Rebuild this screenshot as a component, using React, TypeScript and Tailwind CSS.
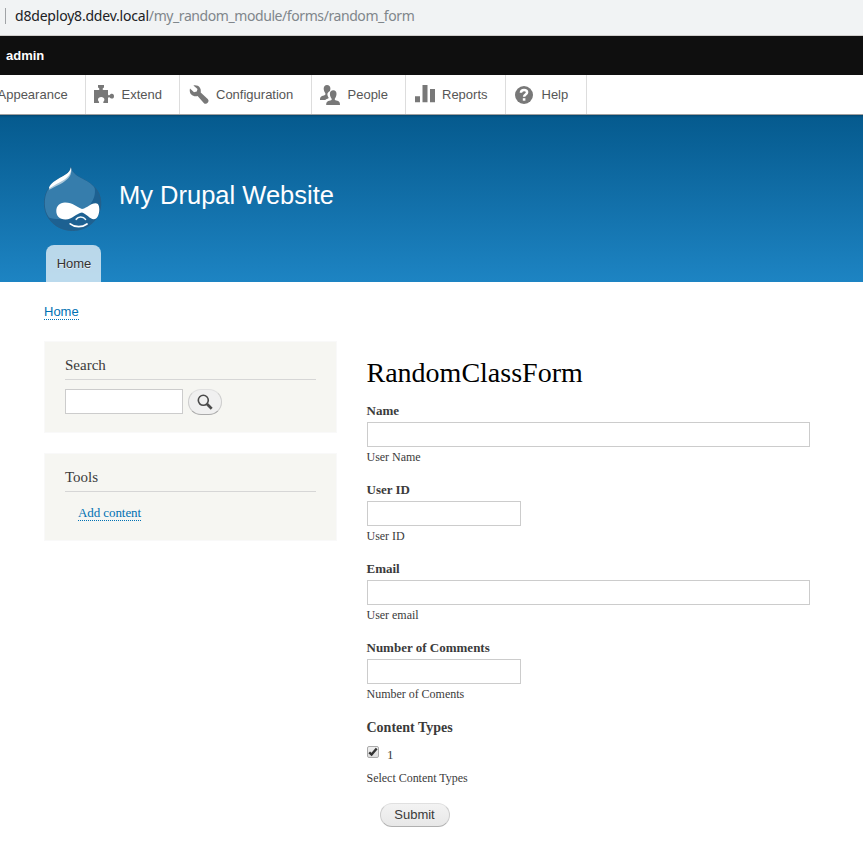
import React from "react";

const sans = "font-['Liberation_Sans',Arial,sans-serif]";
const serif = "font-['Liberation_Serif',Georgia,serif]";

function ExtendIcon() {
  return (
    <svg className="block h-[20px] w-[20px]" viewBox="0 0 20 20" fill="#787878">
      <path d="M4 0h6v2.200c-.2.600-1.400.800-1.400 1.800 0 .8.600 1 1.200 1H14v4.400c.2.9 1 1.100 1.700.6.7-.8 1.100-1.200 2.300-1.200 1.300 0 2 1.100 2 2.400s-.7 2.400-2 2.400c-1.200 0-1.600-.4-2.300-1.100-.7-.5-1.500-.3-1.700.6V18H9.500c-.5-.5-.2-1.200.2-1.700.5-.6.700-1 .7-1.600 0-1.700-1.400-2.700-3.200-2.700S4 13 4 14.700c0 .7.300 1.100.8 1.700.4.5.500 1.100.1 1.600H0V5h4.400c.7 0 1-.3 1-1 0-1-1.200-1.200-1.400-1.800z" />
    </svg>
  );
}

function WrenchIcon() {
  return (
    <svg className="block h-[20px] w-[20px]" viewBox="0 0 20 20" fill="#787878">
      <path d="M4.400.500C7 0 9.500.7 10.900 2.700c1 1.500 1 3.200.8 4.700l7 6.500c2.400 2.300-.7 6.200-3.500 4.500L8.600 11c-2.200.6-4.700.2-6.300-1.500C.8 8 .4 5.600 1 3.600l4 3.600 2.800-.8.700-2.400z" />
    </svg>
  );
}

function PeopleIcon() {
  return (
    <svg className="block h-[20px] w-[20px]" viewBox="0 0 20 20" fill="#787878">
      <path d="M7 0c2.100 0 3.400 1.400 3.400 3.500 0 1-.1 1.500-.5 2.400C7.800 7 7 8.400 7.500 10.300c.2 1.100.8 2 1.300 2.800-1.100.8-2.500 1-3.500 1.900H0c0-3 .8-3.900 4-4.600 1.400-.3 1.900-.9 1.200-2.300C4.200 6.700 3.700 5.100 3.700 3.600 3.700 1.500 5 0 7 0z" />
      <path d="M13.300 5.200c2.100 0 3.200 1.500 3.200 3.500 0 1.500-.5 3.300-1.400 4.500-.8 1.100-.2 1.900 1.200 2.200 3 .7 3.700 1.600 3.700 4.600H6.200c0-3 .8-3.900 4-4.600 1.500-.3 2-.9 1.100-2.200-.9-1.200-1.400-3-1.400-4.500 0-2 1.300-3.500 3.400-3.500z" />
    </svg>
  );
}

function ReportsIcon() {
  return (
    <svg className="block h-[20px] w-[20px]" viewBox="0 0 20 20" fill="#787878">
      <path d="M0 11.300h5v6H0zM7.500 0h5v17.300h-5zM15 4h5v13.300h-5z" />
    </svg>
  );
}

function HelpIcon() {
  return (
    <svg className="block h-[20px] w-[20px]" viewBox="0 0 20 20">
      <circle cx="10" cy="10" r="9" fill="#787878" />
      <path d="M6.900 7.700C7 5.800 8.300 4.900 10 4.900c1.800 0 3.100.9 3.100 2.400 0 2.300-3 2-3 4.400" fill="none" stroke="#fff" strokeWidth="2.500" />
      <path d="M8.800 13.200h2.600v2.500H8.800z" fill="#fff" />
    </svg>
  );
}

function Druplicon() {
  return (
    <svg className="block h-[66px] w-[58px]" viewBox="0 0 58 66">
      <path d="M26.800 1c.6 4.500 5 8.200 9.700 10.800C45 16.500 56.800 22 56.800 37c0 16-12.500 27.500-28.300 27.500S.5 53 .5 37.500C.5 27 5 20.500 11 15.500 18 10 26 8.500 26.800 1z" fill="#1d6192" stroke="#265f88" strokeWidth="0.900" />
      <path d="M26.800 1c.6 4.500 5 8.200 9.700 10.800C42 14.800 48 17.500 50.600 22c2.400 11-7 23.500-21.600 28.500-8.500 3-17.500 3.500-24 1C2 47.500.8 42.500.8 37.500.8 27 5 20.500 11 15.500 18 10 26 8.500 26.800 1z" fill="#367dac" />
      <path d="M27 2c.5 1.600.4 3.200.1 4.800-.8 5.200-7 9.700-12.600 12.200C10.800 20.500 8 22.800 5.200 23.700 4.300 21.500 9 17 13 14.300 18.500 10.500 26 8 27 2z" fill="#a9c7da" />
      <path d="M27 1.200c.2 1.700.2 3-.2 4.300C25 12.200 18 15 12.500 18 9 20 6.800 21.700 5 22.500c.2-4 5-7 9-9.500C19 9.700 26 7.500 27 1.200z" fill="#fff" />
      <path d="M21 36.600c8.500 0 10.800 4.400 17 6.500 6-1.300 8-5.800 13.700-5.800 2.800 0 3.600 3 3.600 6.200 0 5-2 9.700-5.500 9.700-4.100 0-7-5.300-11.800-6.700-6 1-9.500 6.900-16.500 6.900-6.300 0-9.200-3.700-9.200-8.400s3.200-8.400 8.700-8.400z" fill="#fff" />
      <path d="M32.200 53.300c1.900-3 7.100-3 9.300.1" fill="none" stroke="#eef6fa" strokeWidth="1.600" strokeLinecap="round" />
      <path d="M26.200 57.800c5 4 12 3.700 16.800.2" fill="none" stroke="#fff" strokeWidth="1.700" strokeLinecap="round" />
    </svg>
  );
}

function Tab({ icon, label, width, gap = "gap-[7px]", pad = "pl-2" }: { icon: React.ReactNode; label: string; width: string; gap?: string; pad?: string }) {
  return (
    <a className={`flex shrink-0 items-center border-r border-[#ddd] ${pad} ${gap} ${width}`}>
      {icon}
      <span>{label}</span>
    </a>
  );
}

function Field({ label, help, wide }: { label: string; help: string; wide?: boolean }) {
  return (
    <div className="mb-5 h-[59px]">
      <label className="-ml-[0.5px] block h-[18px] text-[13px] leading-[14px] font-bold">{label}</label>
      <input className={`block h-[25px] border border-[#ccc] bg-white ${wide ? "w-[443px]" : "w-[154px]"}`} />
      <div className="mt-[3px] -ml-[0.5px] text-[12px] leading-[15px] tracking-[-0.02px]">{help}</div>
    </div>
  );
}

export default function App() {
  return (
    <div className={`h-[842px] w-[863px] overflow-hidden bg-white text-[#3b3b3b] ${serif}`}>
      <div className="flex h-9 items-center border-b border-[#d0cecc] bg-[#f1f3f4] pb-1 pl-[5px] font-['Noto_Sans',sans-serif] text-[14px] whitespace-nowrap text-[#80868b]">
        <span className="mr-[9px] h-4 w-px bg-[#a0a3a6]" />
        <span className="tracking-[-0.2px] text-[#202124]">d8deploy8.ddev.local</span>
        <span className="tracking-[-0.42px]">/my_random_module/forms/random_form</span>
      </div>
      <div className={`flex h-[39px] items-center bg-[#0f0f0f] pl-1.5 text-[13px] font-bold text-white ${sans}`}>admin</div>
      <nav className={`flex h-10 border-b border-[#a0a0a0] bg-white text-[13px] text-[#565656] ${sans}`}>
        <a className="flex w-[86px] shrink-0 items-center border-r border-[#ddd]">
          <span className="ml-[-2.5px]">Appearance</span>
        </a>
        <Tab icon={<ExtendIcon />} label="Extend" width="w-[94px]" gap="gap-[7.5px]" />
        <Tab icon={<WrenchIcon />} label="Configuration" width="w-[132px]" pad="pl-[9px]" />
        <Tab icon={<PeopleIcon />} label="People" width="w-[94px]" gap="gap-[7.5px]" />
        <Tab icon={<ReportsIcon />} label="Reports" width="w-[100px]" pad="pl-[9px]" />
        <Tab icon={<HelpIcon />} label="Help" width="w-[81px]" gap="gap-[7.5px]" />
      </nav>
      <header className={`flex h-[167px] flex-col bg-linear-to-b from-[#055a8e] to-[#1d84c3] pl-11 shadow-[inset_0_3px_3px_-3px_rgba(0,0,0,0.5)] ${sans}`}>
        <div className="flex h-[130px] pt-[51px]">
          <Druplicon />
          <div className="mt-[14px] ml-[17px] text-[25.5px] leading-[30px] text-[#fffeff]">My Drupal Website</div>
        </div>
        <a className="ml-0.5 flex h-[37px] w-[55px] items-center justify-center rounded-t-lg bg-white/70 pl-px text-[13px] text-[#333] [text-shadow:0_1px_#eee]">Home</a>
      </header>
      <div className={`h-[59px] pt-[22px] pl-11 text-[13px] leading-[15px] text-[#0071b3] ${sans}`}>
        <a className="inline-block border-b border-dotted border-[#0071b3]">Home</a>
      </div>
      <div className="flex gap-[30px] pl-11">
        <aside className="flex w-[293px] flex-col gap-5">
          <section className="h-[92px] border border-[#f9f9f9] bg-[#f6f6f2] px-5 pt-[13px]">
            <h2 className="h-[25px] border-b border-[#d6d6d6] text-[15px] leading-[20px]">Search</h2>
            <div className="mt-[9px] flex gap-[5px]">
              <input className="h-[25px] w-[118px] border border-[#ccc] bg-white" />
              <button className="flex h-[26px] w-[34px] items-center justify-center rounded-full border border-[#ccc] border-t-[#e0e0e0] border-b-[#aaa] bg-[#f0f0f0]">
                <svg className="mr-px mb-px h-4 w-4" viewBox="0 0 16 16" fill="none" stroke="#4a4a4a">
                  <circle cx="6.300" cy="6.300" r="5" strokeWidth="1.600" />
                  <path d="m10 10 4.700 4.700" strokeWidth="2.700" />
                </svg>
              </button>
            </div>
          </section>
          <section className="h-[88px] border border-[#f9f9f9] bg-[#f6f6f2] px-5 pt-[13px]">
            <h2 className="h-[25px] border-b border-[#d6d6d6] text-[15px] leading-[20px]">Tools</h2>
            <a className="mt-[14px] ml-[13px] inline-block border-b border-dotted border-[#0071b3] text-[13px] leading-[14px] tracking-[-0.08px] text-[#0071b3]">Add content</a>
          </section>
        </aside>
        <main className="pt-[15px]">
          <h1 className="-ml-[0.5px] h-[48px] text-[28px] leading-[34px] text-black">RandomClassForm</h1>
          <Field label="Name" help="User Name" wide />
          <Field label="User ID" help="User ID" />
          <Field label="Email" help="User email" wide />
          <Field label="Number of Comments" help="Number of Coments" />
          <div className="-ml-[0.5px] h-[26px] text-[14px] leading-[16px] font-bold">Content Types</div>
          <div className="flex h-[25px]">
            <span className="flex h-[12px] w-[12px] items-center justify-center rounded-[2px] border border-[#aaa] bg-linear-to-b from-[#f0f0f0] to-[#ddd]">
              <svg className="h-[10px] w-[10px]" viewBox="0 0 10 10" fill="none" stroke="#333" strokeWidth="2.400">
                <path d="m1.200 5.300 2.400 2.300L8.700 1.500" />
              </svg>
            </span>
            <span className="mt-px ml-[8px] text-[13px] leading-[15px]">1</span>
          </div>
          <div className="-ml-[0.5px] text-[12px] leading-[15px] tracking-[-0.02px]">Select Content Types</div>
          <button className={`mt-[17px] ml-[13px] block h-[24px] w-[70px] rounded-full border border-[#ccc] border-t-[#e0e0e0] border-b-[#b0b0b0] bg-linear-to-b from-[#f3f3f3] to-[#e8e8e8] pr-px text-[13px] leading-[22px] text-[#3a3a3a] ${sans}`}>Submit</button>
        </main>
      </div>
    </div>
  );
}
